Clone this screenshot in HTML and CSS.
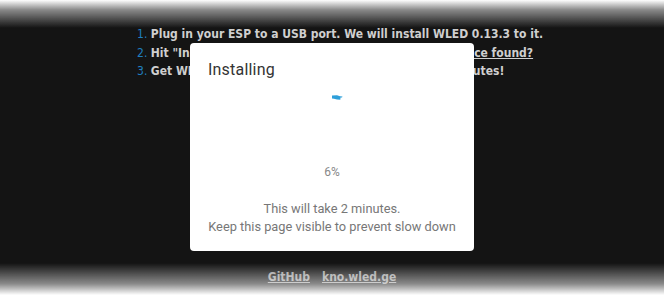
FILE: index.html
```html
<!DOCTYPE html>
<html>
<head>
<meta charset="utf-8">
<link rel="stylesheet" href="styles.css">
</head>
<body>
<div class="page">
  <ol class="steps">
    <li>Plug in your ESP to a USB port. We will install WLED 0.13.3 to it.</li>
    <li>Hit "Install" and select the correct COM port. <a href="#">No device found?</a></li>
    <li>Get WLED installed and connected in less than 3 minutes!</li>
  </ol>
  <div class="spacer"></div>
  <div class="footer"><a href="#">GitHub</a><a href="#">kno.wled.ge</a></div>
</div>
<div class="fade-top"></div>
<div class="fade-bottom"></div>
<div class="dialog">
  <div class="title">Installing</div>
  <div class="spinner">
    <svg width="12" height="7" viewBox="0 0 12 7"><path d="M0 0.5 L5 0.3 L8 1.2 L10.5 1.4 L10 2.4 L8.5 2.6 L8.3 4.8 L5 4.6 L2 3.8 L0 3.5 Z" fill="#2d9fda"/></svg>
  </div>
  <div class="percent">6%</div>
  <div class="note">This will take 2 minutes.<br>Keep this page visible to prevent slow down</div>
</div>
</body>
</html>
```
FILE: styles.css
```css
html, body {
  margin: 0;
  padding: 0;
  height: 100%;
}
body {
  background: #141414;
  font-family: "DejaVu Sans Condensed", "DejaVu Sans", sans-serif;
  overflow: hidden;
}
.page {
  display: flex;
  flex-direction: column;
  align-items: center;
  padding-top: 25px;
}
.steps {
  margin: 0;
  padding: 0 0 0 30px;
  color: #cfcfcf;
  font-weight: bold;
  font-size: 12px;
  line-height: 18.5px;
}
.steps li::marker {
  color: #1f7fc0;
  font-weight: normal;
}
.steps a {
  color: #cfcfcf;
}
.spacer {
  height: 189px;
}
.footer {
  display: flex;
  gap: 12px;
  font-size: 12px;
  font-weight: bold;
}
.footer a {
  color: #a0a0a0;
}
.fade-top {
  position: fixed;
  left: 0;
  right: 0;
  top: 0;
  height: 28px;
  background: linear-gradient(to bottom, rgba(255,255,255,1) 0%, rgba(255,255,255,0.5) 35%, rgba(20,20,20,0) 100%);
  pointer-events: none;
}
.fade-bottom {
  position: fixed;
  left: 0;
  right: 0;
  bottom: 0;
  height: 32px;
  background: linear-gradient(to top, rgba(255,255,255,1) 0%, rgba(255,255,255,0.5) 35%, rgba(20,20,20,0) 100%);
  pointer-events: none;
}
.dialog {
  position: fixed;
  left: 190px;
  top: 43px;
  width: 284px;
  height: 208px;
  box-sizing: border-box;
  background: #fff;
  border-radius: 4px;
  font-family: Roboto, sans-serif;
  display: flex;
  flex-direction: column;
  padding: 17px 18px 0 18px;
}
.title {
  font-size: 16px;
  color: #333;
  line-height: 20px;
  letter-spacing: 0.2px;
}
.spinner {
  height: 7px;
  margin-top: 15px;
  display: flex;
  justify-content: center;
  padding-left: 12px;
}
.percent {
  margin-top: 62px;
  text-align: center;
  font-size: 12px;
  color: #888;
  line-height: 16px;
}
.note {
  margin-top: 20px;
  text-align: center;
  font-size: 12.8px;
  color: #777;
  line-height: 18px;
}
```
